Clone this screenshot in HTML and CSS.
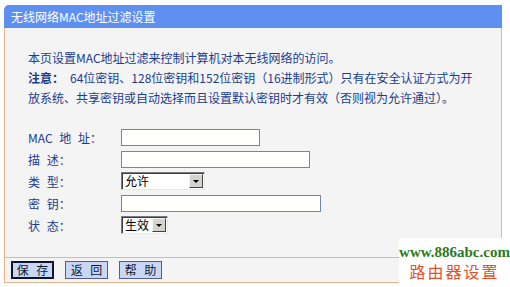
FILE: index.html
```html
<!DOCTYPE html>
<html lang="zh-CN">
<head>
<meta charset="utf-8">
<title>无线网络MAC地址过滤设置</title>
<link rel="stylesheet" href="styles.css">
</head>
<body>
<div class="page">
  <div class="titlebar">无线网络MAC地址过滤设置</div>
  <div class="panel">
    <p class="intro">本页设置MAC地址过滤来控制计算机对本无线网络的访问。</p>
    <p class="note"><strong class="note-head">注意：</strong><span>64位密钥、128位密钥和152位密钥（16进制形式）只有在安全认证方式为开放系统、共享密钥或自动选择而且设置默认密钥时才有效（否则视为允许通过）。</span></p>
    <div class="form">
      <div class="row"><label class="lbl">MAC 地 址：</label><input class="txt w-mac" type="text"></div>
      <div class="row"><label class="lbl">描 述：</label><input class="txt w-desc" type="text"></div>
      <div class="row"><label class="lbl">类 型：</label><span class="select w-type"><select><option>允许</option><option>禁止</option></select><span class="arrow"></span></span></div>
      <div class="row"><label class="lbl">密 钥：</label><input class="txt w-key" type="text"></div>
      <div class="row"><label class="lbl">状 态：</label><span class="select w-state"><select><option>生效</option><option>失效</option></select><span class="arrow"></span></span></div>
    </div>
  </div>
  <div class="btnbar">
    <button class="btn focus">保 存</button>
    <button class="btn">返 回</button>
    <button class="btn">帮 助</button>
  </div>
</div>
<div class="watermark">
  <div class="wm-url">www.886abc.com</div>
  <div class="wm-cn">路由器设置</div>
</div>
</body>
</html>
```
FILE: styles.css
```css
html, body {
  margin: 0;
  padding: 0;
  background: #ffffff;
}
body {
  font-family: "Noto Sans CJK SC", "DejaVu Sans", sans-serif;
  font-size: 12px;
  width: 510px;
  height: 287px;
  overflow: hidden;
  position: relative;
}
.page {
  margin: 5px 0 0 4px;
  width: 498px;
}
.titlebar {
  height: 23px;
  line-height: 23px;
  background: #5d90f1;
  color: #ffffff;
  padding-left: 7px;
  border-top-left-radius: 5px;
  font-size: 12px;
}
.panel {
  background: #f4f4f4;
  border-left: 1px solid #ebb58a;
  border-right: 1px solid #ebb58a;
  padding: 20px 24px 21px 23px;
  color: #1a3d8e;
}
.intro, .note {
  margin: 0;
  line-height: 20px;
  width: 445px;
}
.note-head {
  font-weight: bold;
  padding-right: 6px;
}
.form {
  margin-top: 18px;
  display: flex;
  flex-direction: column;
}
.row {
  height: 22px;
  display: flex;
  align-items: center;
}
.lbl {
  width: 93px;
  flex: none;
  word-spacing: 4px;
}
.txt {
  box-sizing: border-box;
  height: 17px;
  margin: 0;
  padding: 0 2px;
  border: 1px solid #7086b0;
  background: #fffffc;
  font: inherit;
}
.w-mac { width: 139px; }
.w-desc { width: 189px; }
.w-key { width: 200px; }
.select {
  position: relative;
  display: inline-block;
  height: 18px;
  box-sizing: border-box;
}
.w-type { width: 84px; }
.w-state { width: 47px; }
.select select {
  -webkit-appearance: none;
  appearance: none;
  box-sizing: border-box;
  width: 100%;
  height: 18px;
  margin: 0;
  padding: 0 0 0 3px;
  border: 1px solid;
  border-color: #7b7b7b #e8e8e8 #e8e8e8 #7b7b7b;
  box-shadow: inset 1px 1px 0 #3c3c3c;
  background: #ffffff;
  color: #000000;
  font: inherit;
  line-height: 16px;
  outline: none;
}
.arrow {
  position: absolute;
  right: 2px;
  top: 2px;
  width: 14px;
  height: 14px;
  box-sizing: border-box;
  background: #d6d3ce;
  border: 1px solid;
  border-color: #f4f4f4 #404040 #404040 #f4f4f4;
}
.arrow::after {
  content: "";
  position: absolute;
  left: 3px;
  top: 5px;
  border-left: 3px solid transparent;
  border-right: 3px solid transparent;
  border-top: 3px solid #000000;
}
.btnbar {
  background: #f4f4f4;
  border: 1px solid #ebb58a;
  height: 24px;
  display: flex;
  align-items: center;
  gap: 11px;
  padding-left: 6px;
}
.btn {
  box-sizing: border-box;
  width: 43px;
  height: 18px;
  margin: 0;
  padding: 0;
  border: 1px solid #4d5f90;
  background: #c9d6f4;
  color: #101830;
  font: inherit;
  font-size: 12px;
  line-height: 14px;
  word-spacing: 5px;
}
.btn.focus {
  border: 2px solid #0c1430;
}
.watermark {
  position: absolute;
  left: 399px;
  top: 238px;
  width: 111px;
  height: 49px;
  background: #ffffff;
  text-align: center;
}
.wm-url {
  font-family: "Liberation Serif", serif;
  font-weight: bold;
  font-size: 15px;
  color: #2d7a1e;
  line-height: 18px;
  margin-top: 5px;
}
.wm-cn {
  font-family: "Noto Sans CJK SC", sans-serif;
  font-size: 16px;
  color: #e4502c;
  letter-spacing: 2px;
  line-height: 20px;
  margin-top: 0;
}
```
